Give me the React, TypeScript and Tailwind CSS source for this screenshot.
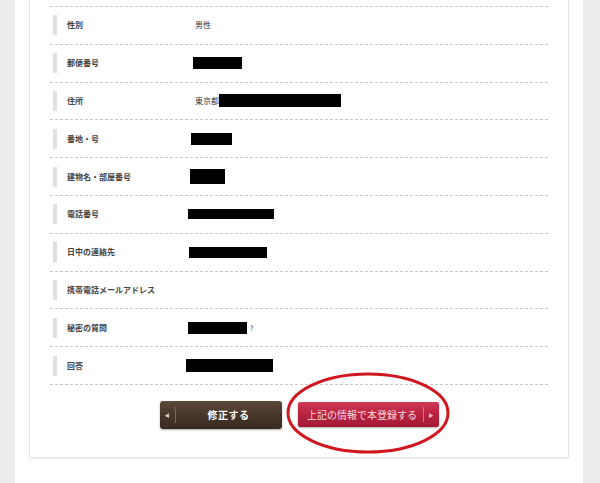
import React from 'react';

type Row = {
  label: string;
  value?: React.ReactNode;
};

const Redact: React.FC<{ className: string }> = ({ className }) => (
  <span className={`inline-block bg-black ${className}`} />
);

const rows: Row[] = [
  { label: '性別', value: <span className="ml-[9px]">男性</span> },
  { label: '郵便番号', value: <Redact className="ml-[7px] h-[12px] w-[49px]" /> },
  {
    label: '住所',
    value: (
      <span className="ml-[9px] flex items-center">
        東京都
        <Redact className="h-[13px] w-[122px]" />
      </span>
    ),
  },
  { label: '番地・号', value: <Redact className="ml-[5px] h-[12px] w-[41px]" /> },
  { label: '建物名・部屋番号', value: <Redact className="ml-[4px] h-[15px] w-[35px]" /> },
  { label: '電話番号', value: <Redact className="ml-[2px] h-[10px] w-[86px]" /> },
  { label: '日中の連絡先', value: <Redact className="ml-[3px] h-[11px] w-[78px]" /> },
  { label: '携帯電話メールアドレス' },
  {
    label: '秘密の質問',
    value: (
      <span className="ml-[2px] flex items-center gap-[3px]">
        <Redact className="h-[12px] w-[59px]" />
        <span className="text-[7px]">?</span>
      </span>
    ),
  },
  { label: '回答', value: <Redact className="h-[13px] w-[87px]" /> },
];

export default function App() {
  return (
    <div
      className="relative flex h-[483px] w-[600px] overflow-hidden bg-white text-[#333]"
      style={{ fontFamily: '"Noto Sans CJK JP", "Noto Sans", sans-serif' }}
    >
      {/* side gutters */}
      <div className="w-[15px] shrink-0 bg-[#ececec]" />

      <div className="flex-1 px-[14px]">
        <div className="border-x border-b border-[#e4e4e4] bg-white px-[20px] pt-[6px] pb-[28px] shadow-[0_1px_1px_rgba(0,0,0,0.04)]">
          <div className="border-t border-dashed border-[#c8c8c8]">
            {rows.map((row) => (
              <div
                key={row.label}
                className="flex h-[37.8px] items-center border-b border-dashed border-[#c8c8c8] text-[8px]"
              >
                <div className="ml-[3px] h-[20px] w-[4px] shrink-0 bg-[#e0e0e0]" />
                <div className="ml-[10px] w-[119px] shrink-0 font-bold text-[#444]">{row.label}</div>
                <div className="flex items-center">{row.value}</div>
              </div>
            ))}
          </div>

          {/* buttons */}
          <div className="mt-[16px] flex items-center justify-center gap-[16px]">
            <button className="flex h-[28px] w-[122px] items-center rounded-[3px] bg-gradient-to-b from-[#5c4a3c] via-[#46352a] to-[#3a2a20] text-white shadow-[0_1px_2px_rgba(0,0,0,0.35)]">
              <span className="flex h-[16px] w-[16px] items-center justify-center border-r border-[#7a6859] text-[5px] text-[#d8cfc8]">
                ◀
              </span>
              <span className="flex-1 text-[10px] font-bold tracking-[0.5px]">修正する</span>
            </button>
            <button className="flex h-[25px] w-[141px] items-center rounded-[2px] bg-gradient-to-b from-[#cf3955] via-[#b8223f] to-[#a51a36] text-[#f6dbe1] shadow-[0_1px_2px_rgba(0,0,0,0.3)]">
              <span className="flex-1 pl-[4px] text-[10px]">上記の情報で本登録する</span>
              <span className="flex h-[15px] w-[16px] items-center justify-center border-l border-[#dd7286] text-[5px] text-[#f3c9d2]">
                ▶
              </span>
            </button>
          </div>
        </div>
      </div>

      <div className="w-[17px] shrink-0 bg-[#ececec]" />

      {/* hand-drawn annotation circle */}
      <svg className="pointer-events-none absolute left-[285px] top-[371px]" width="166" height="84" viewBox="0 0 166 84">
        <ellipse cx="83" cy="42" rx="80" ry="39" fill="none" stroke="#d0161f" strokeWidth="3" />
      </svg>
    </div>
  );
}
